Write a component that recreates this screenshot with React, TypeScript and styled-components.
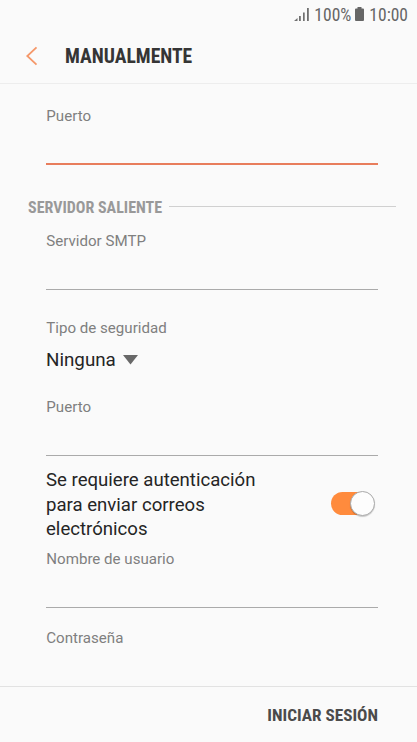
import React from "react";
import styled, { createGlobalStyle } from "styled-components";

const condensed = `"Roboto Condensed", Roboto, sans-serif`;

const Global = createGlobalStyle`
  * { box-sizing: border-box; }
  body { margin: 0; background: #fafafa; font-family: Roboto, sans-serif; color: #252525; }
`;
const Screen = styled.div`
  width: 417px; height: 742px; overflow: hidden; background: #fafafa;
  display: flex; flex-direction: column;
`;
const StatusBar = styled.div`
  height: 29px; flex: none; display: flex; justify-content: flex-end; align-items: center;
  padding-right: 9px; color: #666; font-family: ${condensed}; font-size: 17.5px; line-height: 29px;
`;
const StatusText = styled.span`white-space: nowrap; padding-top: 1px;`;
const SignalIcon = styled.svg`margin: -2px 4px 0 0; display: block;`;
const BatteryIcon = styled.svg`margin: -2px 5px 0 4px; display: block;`;
const Header = styled.header`
  height: 55px; flex: none; display: flex; align-items: center; border-bottom: 1px solid #ededed;
  padding-left: 25px;
`;
const Back = styled.button`
  border: 0; padding: 0; background: none; width: 13px; height: 20px; display: flex;
`;
const Title = styled.h1`
  margin: 2px 0 0 27px; font-family: ${condensed}; font-size: 19.6px; line-height: 24px;
  font-weight: 700; white-space: nowrap; color: #353535;
`;
const Content = styled.main`flex: 1; min-height: 0; overflow: hidden;`;
const Field = styled.div<{ $h: number; $top: number; $active?: boolean }>`
  margin: 0 39px 0 46px; height: ${p => p.$h}px; padding-top: ${p => p.$top}px;
  border-bottom: ${p => (p.$active ? "2px solid #e87d5c" : "1px solid #aaa")};
`;
const Label = styled.div`
  font-size: 15.1px; line-height: 20px; color: #7f7f7f; white-space: nowrap; padding-left: .3px;
`;
const Section = styled.h2`
  margin: 32px 21px 0 28px; height: 20px; display: flex; align-items: center;
  font-family: ${condensed}; font-size: 16px; font-weight: 700; color: #999; white-space: nowrap;
`;
const Rule = styled.i`flex: 1; height: 1px; background: #d0d0d0; margin: -2px 0 0 7px;`;
const Security = styled.div`margin: 28px 39px 0 46px; height: 79px;`;
const Picker = styled.div`
  display: flex; align-items: center; gap: 7px; margin-top: 10px; font-size: 18.8px; line-height: 24px;
`;
const AuthRow = styled.div`
  margin: 12px 39px 0 46px; height: 73px; display: flex; justify-content: space-between; align-items: center;
`;
const AuthText = styled.div`font-size: 18.6px; line-height: 24.5px; white-space: nowrap; padding-top: 1px;`;
const Toggle = styled.div`
  width: 42px; height: 23px; border-radius: 12px; background: #ff8b3d; margin: -3px 5px 0 0;
  display: flex; align-items: center; justify-content: flex-end;
`;
const Knob = styled.div`
  width: 25px; height: 25px; flex: none; border-radius: 50%; background: #fdfdfd;
  border: 1px solid #aaa; margin-right: -2px; box-shadow: 0 1px 1px rgba(0,0,0,.2);
`;
const Footer = styled.footer`
  height: 56px; flex: none; border-top: 1px solid #e2e2e2; display: flex; align-items: center;
  justify-content: flex-end; padding-right: 39px;
`;
const SignIn = styled.button`
  border: 0; background: none; padding: 0; font-family: ${condensed}; font-size: 17.2px;
  font-weight: 700; color: #4b4b4b; white-space: nowrap;
`;
const LastField = styled.div`margin: 20px 39px 0 46px;`;

export default function App() {
  return <><Global /><Screen>
    <StatusBar>
      <SignalIcon width="16" height="14" viewBox="0 0 16 14" fill="#707070">
        <path d="M0 14 3.5 11V14ZM5 9H6.8V14H5ZM9 5.5H10.7V14H9ZM13 1H14.8V14H13Z" />
      </SignalIcon>
      <StatusText>100%</StatusText>
      <BatteryIcon width="9" height="14" viewBox="0 0 9 14" fill="#666">
        <path d="M2.5 0H6.5V1.5H8Q9 1.5 9 2.5V13Q9 14 8 14H1Q0 14 0 13V2.5Q0 1.5 1 1.5H2.5Z" />
      </BatteryIcon>
      <StatusText>10:00</StatusText>
    </StatusBar>
    <Header>
      <Back aria-label="Atrás">
        <svg width="13" height="20" viewBox="0 0 13 20" fill="none" stroke="#f5986a" strokeWidth="1.8">
          <path d="M11.5 1.3 2.3 10 11.5 18.7" />
        </svg>
      </Back>
      <Title>MANUALMENTE</Title>
    </Header>
    <Content>
      <Field $h={81} $top={22} $active><Label>Puerto</Label></Field>
      <Section>SERVIDOR SALIENTE<Rule /></Section>
      <Field $h={73} $top={14}><Label>Servidor SMTP</Label></Field>
      <Security>
        <Label>Tipo de seguridad</Label>
        <Picker>Ninguna
          <svg width="15" height="10" viewBox="0 0 15 10" fill="#686868"><path d="M0 0H15L7.5 9.5Z" /></svg>
        </Picker>
      </Security>
      <Field $h={59} $top={0}><Label>Puerto</Label></Field>
      <AuthRow>
        <AuthText>Se requiere autenticación<br />para enviar correos<br />electrónicos</AuthText>
        <Toggle role="switch" aria-checked="true"><Knob /></Toggle>
      </AuthRow>
      <Field $h={67} $top={8}><Label>Nombre de usuario</Label></Field>
      <LastField><Label>Contraseña</Label></LastField>
    </Content>
    <Footer><SignIn>INICIAR SESIÓN</SignIn></Footer>
  </Screen></>;
}
